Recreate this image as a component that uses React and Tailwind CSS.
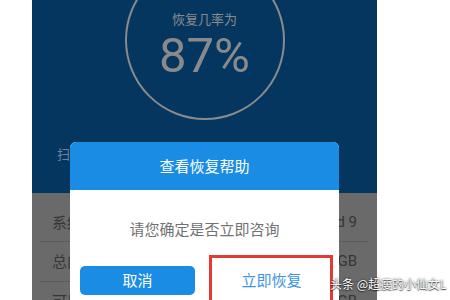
const cjk = { fontFamily: '"Noto Sans CJK SC", "Noto Sans", sans-serif' }

function RecoveryGauge() {
  return (
    <div className="flex justify-center -mt-[40px]">
      <div className="w-[160px] h-[160px] rounded-full border-2 border-[#8a8a8a] flex flex-col items-center">
        <div className="mt-[48px] text-[13px] leading-[18px] text-[#8a8a8a]">恢复几率为</div>
        <div
          className="mt-[2px] text-[49px] leading-[52px] text-[#8a8a8a]"
          style={{ fontFamily: 'Roboto, "Liberation Sans", sans-serif' }}
        >
          87%
        </div>
      </div>
    </div>
  )
}

function InfoRow({ label, value, first }) {
  return (
    <div className={`shrink-0 mx-[8px] flex items-center justify-between px-[12px] border-b border-[#5c5c5c] ${first ? 'h-[49px] pt-[10px]' : 'h-[40px]'}`}>
      <span className="text-[15px] text-[#363636]">{label}</span>
      <span className="text-[15px] text-[#363636]" style={{ fontFamily: 'Roboto, "Noto Sans CJK SC", sans-serif' }}>{value}</span>
    </div>
  )
}

function ConfirmDialog() {
  return (
    <div className="absolute left-[70px] top-[142px] w-[269px] h-[180px] rounded-[6px] overflow-hidden bg-white">
      <div className="h-[48px] bg-[#1b8ce4] flex items-center justify-center text-[15px] text-white">
        查看恢复帮助
      </div>
      <div className="pt-[28px] text-center text-[15px] leading-[22px] text-[#727272]">
        请您确定是否立即咨询
      </div>
      <div className="mt-[26px] px-[10px] flex justify-between">
        <button className="w-[115px] h-[29px] rounded-[5px] bg-[#1b8ce4] text-white text-[15px]">取消</button>
        <button className="w-[115px] h-[29px] rounded-[5px] text-[#3d95e0] text-[15px]">立即恢复</button>
      </div>
    </div>
  )
}

export default function App() {
  return (
    <div className="relative w-[450px] h-[300px] overflow-hidden bg-white" style={cjk}>
      <div className="ml-[32px] w-[345px] h-full flex flex-col">
        <div className="shrink-0 h-[193px] bg-[#04365f] flex flex-col">
          <RecoveryGauge />
          <div className="mt-[24px] ml-[25px] text-[13px] text-[#6f8299]">扫描完成</div>
        </div>
        <div className="shrink-0 bg-[#6a6a6a] pb-[20px]">
          <InfoRow first label="系统版本" value="Android 9" />
          <InfoRow label="总内存" value="64GB" />
          <InfoRow label="可用内存" value="32GB" />
        </div>
      </div>

      <ConfirmDialog />

      {/* annotation box drawn over the screenshot */}
      <div className="absolute left-[209px] top-[255px] w-[124px] h-[60px] border-[3px] border-[#e53935]" />

      <div
        className="absolute left-[330px] top-[275px] text-[12px] leading-[18px] text-white"
        style={{ textShadow: '0 0 2px rgba(0,0,0,0.8), 0 1px 1px rgba(0,0,0,0.6)' }}
      >
        头条 @超瘦的小仙女L
      </div>
    </div>
  )
}
